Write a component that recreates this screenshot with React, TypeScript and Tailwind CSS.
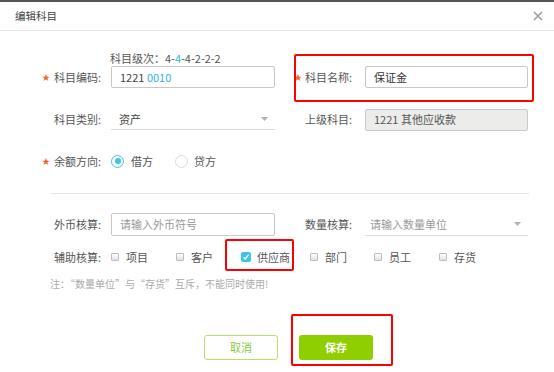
import React from "react";

const font = { fontFamily: '"Noto Sans CJK SC", "Noto Sans", sans-serif' };

function Star() {
  return <span className="text-[#f0641e] text-[8px] leading-none mr-[4px]">★</span>;
}

function Label({ text, star, w }: { text: string; star?: boolean; w: string }) {
  return (
    <div className={`${w} flex items-center justify-end text-[11px] text-[#555] whitespace-nowrap`}>
      {star && <Star />}
      <span>{text}</span>
    </div>
  );
}

function RLabel({ text, star }: { text: string; star?: boolean }) {
  return (
    <div className="w-[71px] ml-[19px] flex items-center text-[11px] text-[#555] whitespace-nowrap">
      <span className="w-[11px] flex items-center">{star && <Star />}</span>
      <span>{text}</span>
    </div>
  );
}

function Caret() {
  return (
    <svg width="7" height="4" viewBox="0 0 7 4" className="mr-[7px]">
      <path d="M0 0 L7 0 L3.5 4 Z" fill="#b0b0b0" />
    </svg>
  );
}

function Check({ label, checked }: { label: string; checked?: boolean }) {
  return (
    <div className="flex items-center text-[11px] text-[#555]">
      {checked ? (
        <span className="w-[10px] h-[10px] rounded-[2px] bg-[#3ec3e6] flex items-center justify-center mr-[6px]">
          <svg width="8" height="8" viewBox="0 0 8 8">
            <path d="M1.5 4.2 L3.3 6 L6.6 1.6" stroke="white" strokeWidth="1.4" fill="none" />
          </svg>
        </span>
      ) : (
        <span className="w-[8px] h-[8px] rounded-[1px] border border-[#bdbdbd] bg-gradient-to-b from-[#ffffff] to-[#e2e2e2] mr-[7px]" />
      )}
      <span>{label}</span>
    </div>
  );
}

export default function App() {
  return (
    <div className="relative w-[554px] h-[372px] bg-white overflow-hidden" style={font}>
      <div className="h-[2px] bg-[#555]" />
      <div className="h-[29px] flex items-center justify-between pl-[15px] pr-[8px] border-b border-[#e6e6e6]">
        <span className="text-[10.5px] text-[#444]">编辑科目</span>
        <svg width="10" height="10" viewBox="0 0 10 10" className="mr-[3px]">
          <path d="M1 1 L9 9 M9 1 L1 9" stroke="#9a9a9a" strokeWidth="1.5" />
        </svg>
      </div>

      <div className="flex flex-col">
        <div className="mt-[21px] h-[12px] pl-[110px] flex items-center text-[11px] text-[#555] leading-none">
          科目级次：4-<span className="text-[#2fb3e0]">4</span>-4-2-2-2
        </div>

        <div className="mt-[2px] h-[22px] flex items-center">
          <Label text="科目编码:" star w="w-[101px]" />
          <div className="ml-[10px] w-[164px] h-[22px] border border-[#c8c8c8] rounded-[2px] flex items-center pl-[8px] text-[11px] text-[#444]">
            1221&nbsp;<span className="text-[#2fb3e0]">0010</span>
          </div>
          <RLabel text="科目名称:" star />
          <div className="w-[163px] h-[22px] border border-[#c8c8c8] rounded-[2px] flex items-center pl-[8px] text-[11px] text-[#333]">
            保证金
          </div>
        </div>

        <div className="mt-[21px] h-[21px] flex items-center">
          <Label text="科目类别:" w="w-[101px]" />
          <div className="ml-[10px] w-[164px] h-[21px] border-b border-[#dcdcdc] flex items-center justify-between pl-[8px] text-[11px] text-[#444]">
            <span>资产</span>
            <Caret />
          </div>
          <RLabel text="上级科目:" />
          <div className="w-[163px] h-[22px] border border-[#c8c8c8] rounded-[2px] bg-[#ececea] flex items-center pl-[8px] text-[11px] text-[#555]">
            1221 其他应收款
          </div>
        </div>

        <div className="mt-[20px] h-[22px] flex items-center">
          <Label text="余额方向:" star w="w-[101px]" />
          <div className="ml-[10px] flex items-center text-[11px] text-[#555]">
            <span className="w-[13px] h-[13px] rounded-full border border-[#3ec3e6] flex items-center justify-center mr-[7px]">
              <span className="w-[6px] h-[6px] rounded-full bg-[#3ec3e6]" />
            </span>
            <span>借方</span>
            <span className="ml-[22px] w-[13px] h-[13px] rounded-full border border-[#dcdcdc] mr-[6px]" />
            <span>贷方</span>
          </div>
        </div>

        <div className="mt-[21px] ml-[51px] w-[478px] h-px bg-[#e4e4e4]" />

        <div className="mt-[19px] h-[23px] flex items-center">
          <Label text="外币核算:" w="w-[101px]" />
          <div className="ml-[10px] w-[164px] h-[23px] border border-[#c8c8c8] rounded-[2px] flex items-center pl-[8px] text-[11px] text-[#999]">
            请输入外币符号
          </div>
          <RLabel text="数量核算:" />
          <div className="w-[163px] h-[22px] border-b border-[#dcdcdc] flex items-center justify-between pl-[5px] text-[11px] text-[#999]">
            <span>请输入数量单位</span>
            <Caret />
          </div>
        </div>

        <div className="mt-[11px] h-[20px] flex items-center">
          <Label text="辅助核算:" w="w-[101px]" />
          <div className="ml-[10px] w-[65px]"><Check label="项目" /></div>
          <div className="w-[65px]"><Check label="客户" /></div>
          <div className="w-[69px]"><Check label="供应商" checked /></div>
          <div className="w-[64px]"><Check label="部门" /></div>
          <div className="w-[65px]"><Check label="员工" /></div>
          <div><Check label="存货" /></div>
        </div>

        <div className="mt-[9px] h-[14px] pl-[50px] flex items-center text-[10px] text-[#aaa] whitespace-nowrap">
          注：“数量单位”与“存货”互斥，不能同时使用!
        </div>

        <div className="mt-[45px] flex items-center pl-[204px] gap-[21px]">
          <button className="w-[74px] h-[25px] border border-[#b8de6e] rounded-[3px] bg-white text-[11px] text-[#8cc63e]">
            取消
          </button>
          <button className="w-[74px] h-[25px] rounded-[3px] bg-[#8fcf00] text-[11px] text-white font-bold">
            保存
          </button>
        </div>
      </div>

      <div className="absolute left-[294px] top-[54px] w-[240px] h-[48px] border-2 border-[#ff0000] rounded-[2px]" />
      <div className="absolute left-[225px] top-[239px] w-[69px] h-[32px] border-2 border-[#ff0000] rounded-[2px]" />
      <div className="absolute left-[291px] top-[314px] w-[102px] h-[52px] border-2 border-[#ff0000] rounded-[2px]" />
    </div>
  );
}
